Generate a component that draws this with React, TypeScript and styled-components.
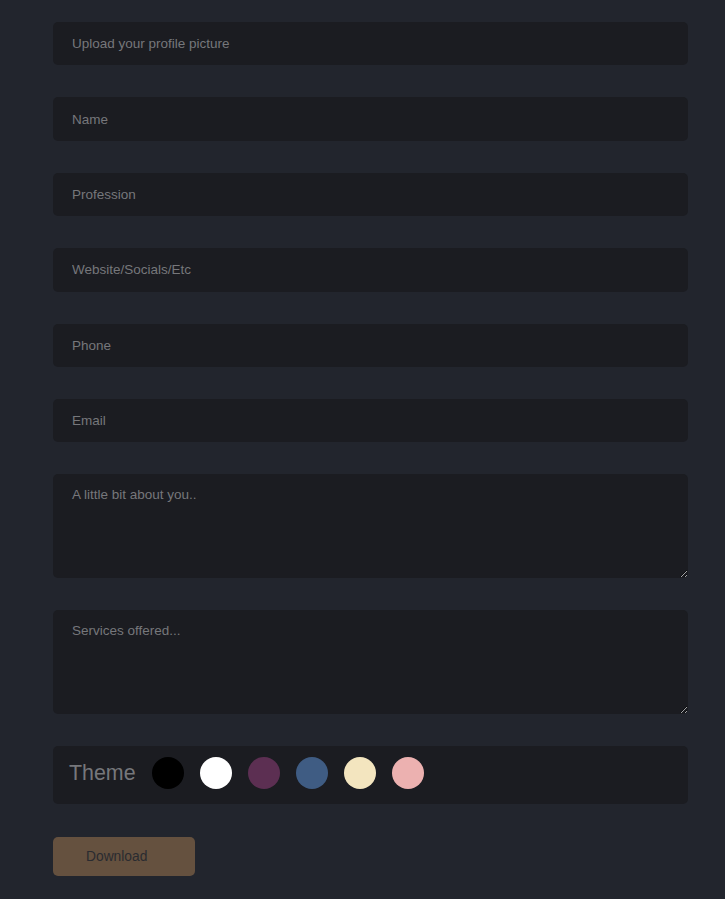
import React from 'react';
import styled, { createGlobalStyle } from 'styled-components';

const GlobalStyle = createGlobalStyle`
  html, body {
    margin: 0;
    padding: 0;
    background: #22252d;
    font-family: "Liberation Sans", Arial, sans-serif;
  }
`;

const Page = styled.div`
  min-height: 899px;
  background: #22252d;
  padding: 22px 37px 0 53px;
  box-sizing: border-box;
`;

const Form = styled.form`
  display: flex;
  flex-direction: column;
  gap: 32px;
  width: 635px;
`;

const fieldBase = `
  width: 100%;
  box-sizing: border-box;
  background: #1b1c21;
  border: none;
  border-radius: 5px;
  color: #c8c8c8;
  font-family: "Liberation Sans", Arial, sans-serif;
  font-size: 13.5px;
  outline: none;
  padding: 0 19px;
  &::placeholder {
    color: #76777b;
  }
`;

const Input = styled.input`
  ${fieldBase}
  height: 43.4px;
  display: block;
`;

const TextArea = styled.textarea`
  ${fieldBase}
  display: block;
  height: 103.6px;
  padding-top: 13px;
  resize: vertical;
  color-scheme: dark;
`;

const ThemeRow = styled.div`
  display: flex;
  align-items: flex-start;
  gap: 16px;
  height: 58px;
  padding: 11px 16px 0;
  background: #1b1c21;
  border-radius: 5px;
  box-sizing: border-box;
`;

const ThemeLabel = styled.span`
  color: #76777b;
  font-size: 21.4px;
  line-height: 32px;
`;

const Swatch = styled.button<{ $color: string }>`
  width: 32px;
  height: 32px;
  border-radius: 50%;
  border: none;
  padding: 0;
  background: ${p => p.$color};
  cursor: pointer;
`;

const DownloadButton = styled.button`
  width: 142px;
  height: 39px;
  margin-top: 1px;
  padding: 0 0 0 33px;
  text-align: left;
  border: none;
  border-radius: 5px;
  background: #65513f;
  color: #2a2b30;
  font-family: "Liberation Sans", Arial, sans-serif;
  font-size: 13.8px;
  cursor: pointer;
`;

const swatches = ['#000000', '#ffffff', '#5c2f52', '#3f5c83', '#f3e5bf', '#ecb1b0'];

const App = () => {
  return (
    <Page>
      <GlobalStyle />
      <Form onSubmit={e => e.preventDefault()}>
        <Input placeholder="Upload your profile picture" />
        <Input placeholder="Name" />
        <Input placeholder="Profession" />
        <Input placeholder="Website/Socials/Etc" />
        <Input placeholder="Phone" />
        <Input placeholder="Email" />
        <TextArea placeholder="A little bit about you.." />
        <TextArea placeholder="Services offered..." />
        <ThemeRow>
          <ThemeLabel>Theme</ThemeLabel>
          {swatches.map(c => (
            <Swatch key={c} type="button" $color={c} />
          ))}
        </ThemeRow>
        <div>
          <DownloadButton type="button">Download</DownloadButton>
        </div>
      </Form>
    </Page>
  );
};

export default App;
